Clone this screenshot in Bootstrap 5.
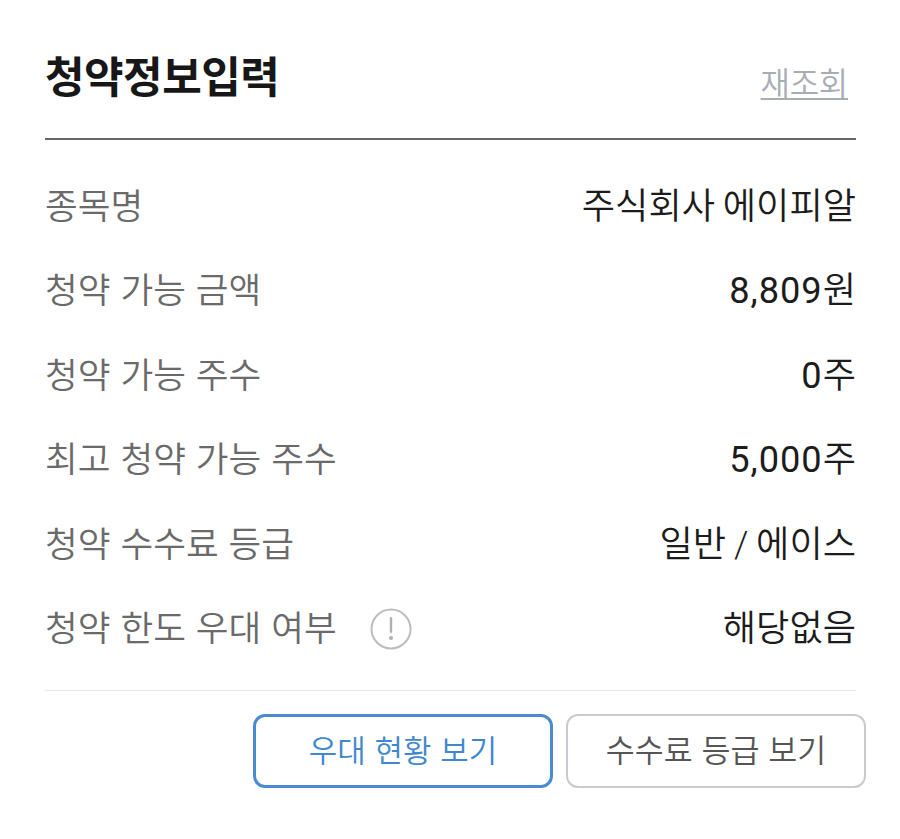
<!DOCTYPE html>
<html lang="ko"><head><meta charset="utf-8">
<link href="https://cdn.jsdelivr.net/npm/bootstrap@5.3.0/dist/css/bootstrap.min.css" rel="stylesheet">
<style>
html,body{background:#fff;height:839px;overflow:hidden}
body{font-family:"Noto Sans CJK KR","Noto Sans",sans-serif;color:#1c1c1c;font-weight:350}
.sheet{padding:42px 44px 0 45px}
.head-row{height:98px;border-bottom:2px solid #666;padding-bottom:36px}
.ttl{font-size:43px;font-weight:700;line-height:60px;margin:3px 0 0;color:#171717;letter-spacing:-.5px}
.reload{font-size:32px;line-height:46px;color:#a9adb3;text-decoration:underline;text-decoration-thickness:2px;text-underline-offset:3px;margin:18px 8px 0 0;letter-spacing:-.3px}
.info-list{padding-top:22px;padding-bottom:22px;border-bottom:1px solid #e8e8e8}
.info-row{height:84.4px;font-size:35.6px;line-height:84px}
.lab{color:#6a6a6a}
.val{color:#1c1c1c;font-family:Roboto,"Noto Sans CJK KR",sans-serif;font-size:36.2px;font-weight:350;padding-top:3px;word-spacing:-1px}
.num{font-weight:400;letter-spacing:1px}
.hint{width:42px;height:42px;margin-left:33px;margin-top:5px}
.btn-zone{margin-right:-10px;margin-top:23px;gap:13px}
.act{width:300px;height:74px;font-size:31px;border-radius:12px;background:#fff;padding:0 0 6px;line-height:1;font-weight:350}
.act-blue{border:3px solid #4a8bd0;color:#3f87cf}
.act-grey{border:2px solid #c9cbce;color:#555;font-size:31.5px}
</style></head><body>
<div class="sheet">
<div class="head-row d-flex justify-content-between align-items-center">
<h1 class="ttl">청약정보입력</h1><a class="reload" href="#">재조회</a>
</div>
<div class="info-list">
<div class="info-row d-flex justify-content-between"><span class="lab">종목명</span><span class="val">주식회사 에이피알</span></div>
<div class="info-row d-flex justify-content-between"><span class="lab">청약 가능 금액</span><span class="val"><span class="num">8,809</span>원</span></div>
<div class="info-row d-flex justify-content-between"><span class="lab">청약 가능 주수</span><span class="val"><span class="num">0</span>주</span></div>
<div class="info-row d-flex justify-content-between"><span class="lab">최고 청약 가능 주수</span><span class="val"><span class="num">5,000</span>주</span></div>
<div class="info-row d-flex justify-content-between"><span class="lab">청약 수수료 등급</span><span class="val">일반 / 에이스</span></div>
<div class="info-row d-flex justify-content-between"><span class="lab d-flex align-items-center">청약 한도 우대 여부<svg class="hint" viewBox="0 0 42 42"><circle cx="21" cy="21" r="19.5" fill="none" stroke="#bdbdbd" stroke-width="2"/><rect x="19.8" y="9" width="2.4" height="16" rx="1.2" fill="#b0b0b0"/><circle cx="21" cy="30" r="2.1" fill="#b0b0b0"/></svg></span><span class="val">해당없음</span></div>
</div>
<div class="btn-zone d-flex justify-content-end">
<button class="btn act act-blue">우대 현황 보기</button>
<button class="btn act act-grey">수수료 등급 보기</button>
</div>
</div>
<script src="https://cdn.jsdelivr.net/npm/bootstrap@5.3.0/dist/js/bootstrap.bundle.min.js"></script>
</body></html>
